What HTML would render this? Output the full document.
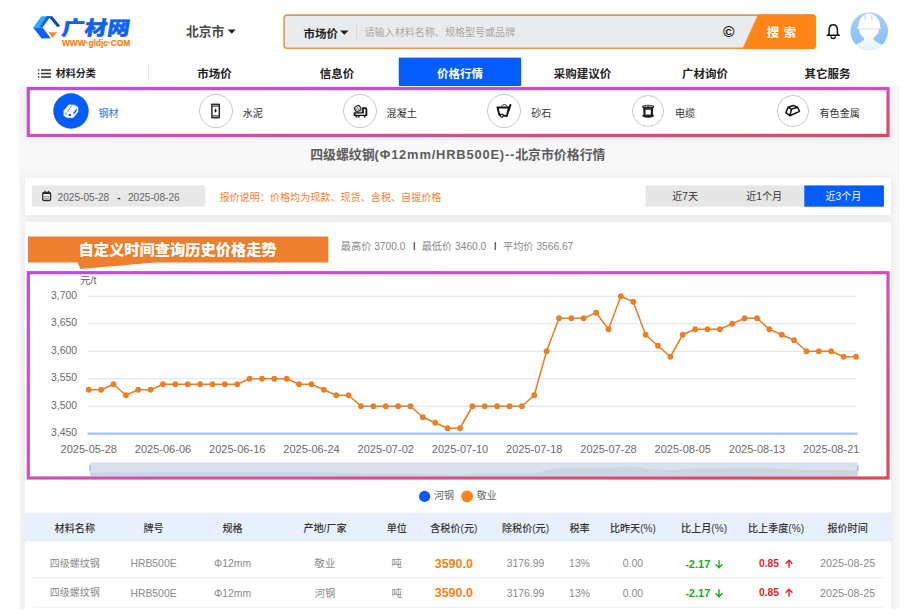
<!DOCTYPE html>
<html lang="zh-CN"><head><meta charset="utf-8"><title>广材网 - 四级螺纹钢价格行情</title>
<style>
html,body{margin:0;padding:0;background:#fff;}
body{width:916px;height:616px;position:relative;overflow:hidden;font-family:"Liberation Sans","Noto Sans CJK SC",sans-serif;}
.t{position:absolute;white-space:nowrap;}
.r,.abs{position:absolute;}
.sh{background:#fff;box-shadow:0 0 7px 1px rgba(0,0,0,0.075);}
.ar{font-family:"DejaVu Sans",sans-serif;font-weight:700;font-size:0.95em;}
</style></head><body>
<div class="abs" style="left:19px;top:86px;width:881px;height:523px;background:#f8f8f8;overflow:hidden">
<div class="abs sh" style="left:8px;top:1px;width:862px;height:50px"></div>
<div class="abs sh" style="left:6px;top:92px;width:866px;height:37px"></div>
<div class="abs sh" style="left:6px;top:136px;width:866px;height:420px"></div>
</div>
<svg class="abs" style="left:0;top:0" width="916" height="616" viewBox="0 0 916 616">
<defs>
<linearGradient id="pg" x1="0" y1="0" x2="1" y2="1"><stop offset="0" stop-color="#b553d8"/><stop offset="0.5" stop-color="#d24fbd"/><stop offset="1" stop-color="#e34658"/></linearGradient>
<linearGradient id="gl" x1="0" y1="0" x2="1" y2="0"><stop offset="0" stop-color="#f8f8f8"/><stop offset="1" stop-color="#ededed"/></linearGradient>
<linearGradient id="gr" x1="0" y1="0" x2="1" y2="0"><stop offset="0" stop-color="#f0f0f0"/><stop offset="1" stop-color="#f8f8f8"/></linearGradient>
</defs>
<!-- active tab -->
<rect x="398.8" y="57.6" width="122.3" height="28.4" fill="#035dfd"/>
<!-- category box -->
<rect x="29" y="89" width="858" height="46" fill="#fff"/>
<rect x="28.3" y="88.6" width="859.7" height="46.8" fill="none" stroke="url(#pg)" stroke-width="3.2"/>
<!-- card 1 -->
<rect x="25" y="177.5" width="866" height="37.5" fill="#fff"/>
<rect x="32" y="185.4" width="173.5" height="21.3" fill="#e8e8e8"/>
<rect x="645.5" y="185.4" width="159" height="21.3" fill="#e6e6e6"/>
<rect x="804.3" y="185.4" width="79.6" height="21.3" fill="#035dfd"/>
<!-- card 2 -->
<rect x="25" y="222" width="866" height="387" fill="#fff"/>
<!-- banner -->
<polygon points="28,236.5 328.3,236.5 328.3,262.4 155,262.4 80.3,269 77.6,262.4 28,262.4" fill="#ed7f2e"/>
<!-- table header -->
<rect x="25" y="512.6" width="866" height="28.8" fill="#e8f0fe"/>
<rect x="32.5" y="577.3" width="851.3" height="1" fill="#ececec"/>
<rect x="32.5" y="606.6" width="851.3" height="1" fill="#ececec"/>
</svg>
<svg class="abs" style="left:28px;top:10px" width="40" height="34" viewBox="28 10 40 34">
<polygon points="33.1,27.6 41.5,16.2 46.2,16.2 38.6,27.6" fill="#29b3f6"/>
<polygon points="38.6,27.6 46.2,16.2 50.4,16.8 42.6,27.6" fill="#0d6af5"/>
<polygon points="46,16.2 52.2,16.2 60.3,26 57.2,27 49.6,17.8" fill="#0a45b8"/>
<polygon points="33.1,27.6 42.6,27.6 50.8,38.2 41.6,38.4" fill="#0d5ff5"/>
<polygon points="48.2,32.3 56.9,32.3 52.6,37.9" fill="#f58a1f"/>
</svg>
<div class="t" style="left:62.3px;top:10.80px;line-height:36px;font-size:22.4px;color:#0f62f5;font-weight:900;-webkit-text-stroke:0.5px #0f62f5;transform:skewX(-9deg) scaleY(0.87);letter-spacing:0.3px;font-family:"Noto Sans CJK SC",sans-serif;">广材网</div>
<div class="t" style="left:62px;top:35.70px;line-height:15px;font-size:9.3px;color:#f58220;font-weight:700;-webkit-text-stroke:0.25px #f58220;transform-origin:0 50%;transform:scaleX(0.897);">WWW·gldjc·COM</div>
<div class="t" style="left:186px;top:21.90px;line-height:20px;font-size:12.8px;color:#484848;font-weight:700;">北京市</div>
<svg class="abs" style="left:228px;top:28px" width="10" height="8" viewBox="228 28 10 8"><polygon points="227.9,29.6 235.7,29.6 231.8,33.7" fill="#222"/></svg>
<svg class="abs" style="left:280px;top:12px" width="540" height="40" viewBox="280 12 540 40"><rect x="284.1" y="15.1" width="531" height="33.1" rx="3" fill="#eaebec" stroke="#e8954a" stroke-width="1.6"/></svg>
<div class="t" style="left:303.5px;top:25.00px;line-height:18px;font-size:11.5px;color:#222;font-weight:700;">市场价</div>
<svg class="abs" style="left:339px;top:29px" width="11" height="8" viewBox="339 29 11 8"><polygon points="340,30.6 348.6,30.6 344.3,34.8" fill="#222"/></svg>
<div class="r" style="left:356.2px;top:25px;width:1px;height:15px;background:#d8d8d8;"></div>
<div class="t" style="left:364.5px;top:25.00px;line-height:16px;font-size:10.05px;color:#a8a8a8;font-weight:400;">请输入材料名称、规格型号或品牌</div>
<div class="t" style="left:723px;top:19.00px;line-height:25px;font-size:15.5px;color:#111;font-weight:700;">©</div>
<svg class="abs" style="left:740px;top:14px" width="78" height="36" viewBox="740 14 78 36">
<path d="M758 14.5 H812.8 a3 3 0 0 1 3 3 V45.75 a3 3 0 0 1 -3 3 H742.5 Z" fill="#ff8517"/></svg>
<div class="t" style="left:781.7px;top:22.90px;line-height:20px;font-size:12.5px;color:#fff;font-weight:700;transform:translateX(-50%);letter-spacing:0.5px;">搜 索</div>
<svg class="abs" style="left:825px;top:22px" width="17" height="19" viewBox="825 22 17 19">
<path d="M827.2 35.200 H839.300 M828.500 35.200 C829.600 33.500 829 31.500 829.100 29.400 C829.300 26.500 831 24.700 833.250 24.700 C835.500 24.700 837.200 26.500 837.400 29.400 C837.500 31.500 836.900 33.500 838 35.200" fill="none" stroke="#111" stroke-width="1.500" stroke-linecap="round" stroke-linejoin="round"/>
<path d="M831 36.300 a2.200 2.200 0 0 0 4.400 0" fill="none" stroke="#111" stroke-width="1.300"/>
</svg>
<svg class="abs" style="left:849px;top:11px" width="41" height="41" viewBox="849 11 41 41">
<defs><clipPath id="ac"><circle cx="869.2" cy="31.2" r="18.8"/></clipPath>
<linearGradient id="ag" x1="0" y1="0" x2="0" y2="1"><stop offset="0" stop-color="#a8d0f8"/><stop offset="1" stop-color="#86bdf5"/></linearGradient>
<linearGradient id="ab" x1="0" y1="0" x2="0" y2="1"><stop offset="0" stop-color="#ffffff"/><stop offset="1" stop-color="#e3effc"/></linearGradient></defs>
<circle cx="869.2" cy="31.2" r="18.8" fill="url(#ag)"/>
<g clip-path="url(#ac)">
<path d="M858.3 27 a10.9 13.4 0 0 1 21.8 0 l0.9 0.9 v0.8 h-23.6 v-0.8 z" fill="#fff"/>
<path d="M859.5 29.2 h19.4 c0.3 4 -3.6 7 -5.6 9.3 c1 3.5 5.5 4.5 9.5 6.5 l-3 8 h-22 l-3 -8 c4 -2 8.5 -3 9.5 -6.5 c-2 -2.300 -5.900 -5.300 -4.800 -9.300 z" fill="url(#ab)"/>
<rect x="864.6" y="15" width="1.1" height="5.400" fill="#b9d8f8"/><rect x="871.4" y="15" width="1.1" height="5.400" fill="#b9d8f8"/>
</g></svg>
<svg class="abs" style="left:36px;top:67px" width="17" height="13" viewBox="36 67 17 13">
<g fill="#333"><rect x="37.9" y="69.3" width="1.4" height="1.5"/><rect x="41" y="69.3" width="10" height="1.5"/>
<rect x="37.9" y="72.8" width="1.4" height="1.5"/><rect x="41" y="72.8" width="10" height="1.5"/>
<rect x="37.9" y="76.3" width="1.4" height="1.5"/><rect x="41" y="76.3" width="10" height="1.5"/></g></svg>
<div class="t" style="left:55.8px;top:65.60px;line-height:16px;font-size:10px;color:#222;font-weight:700;">材料分类</div>
<div class="r" style="left:148px;top:64.5px;width:1px;height:14.5px;background:#e8e8e8;"></div>
<div class="t" style="left:214.6px;top:64.80px;line-height:18px;font-size:11.5px;color:#222;font-weight:700;transform:translateX(-50%);">市场价</div>
<div class="t" style="left:337px;top:64.80px;line-height:18px;font-size:11.5px;color:#222;font-weight:700;transform:translateX(-50%);">信息价</div>
<div class="t" style="left:460px;top:64.80px;line-height:18px;font-size:11.5px;color:#fff;font-weight:700;transform:translateX(-50%);">价格行情</div>
<div class="t" style="left:582.4px;top:64.80px;line-height:18px;font-size:11.5px;color:#222;font-weight:700;transform:translateX(-50%);">采购建议价</div>
<div class="t" style="left:705px;top:64.80px;line-height:18px;font-size:11.5px;color:#222;font-weight:700;transform:translateX(-50%);">广材询价</div>
<div class="t" style="left:827.6px;top:64.80px;line-height:18px;font-size:11.5px;color:#222;font-weight:700;transform:translateX(-50%);">其它服务</div>
<svg class="abs" style="left:52.2px;top:91.7px" width="38" height="38" viewBox="-19 -19 38 38"><circle r="17.7" fill="#035dfd"/><polygon points="-2.060,-6.230 3.390,-5.840 6.900,-3.900 6.900,0.780 2.220,6.620 -3.820,6.620 -7.130,4.670 -7.130,-0.390" fill="#fff" stroke="#fff" stroke-width="0.600" stroke-linejoin="round"/><path d="M0.700 -5.300 L-3.800 1.200" stroke="#035dfd" stroke-width="0.700"/><rect x="-2.260" y="2.920" width="2.140" height="2.140" fill="#035dfd"/><polygon points="2.420,1.560 5.530,-2.340 5.730,-0.390 2.800,3.900" fill="#035dfd"/><rect x="-5.400" y="1.560" width="0.800" height="2.340" fill="#035dfd"/></svg>
<div class="t" style="left:98.5px;top:106.00px;line-height:16px;font-size:10.1px;color:#2f74f5;font-weight:400;">钢材</div>
<svg class="abs" style="left:196.5px;top:91.7px" width="38" height="38" viewBox="-19 -19 38 38"><circle r="16.5" fill="#fff" stroke="#c9c9c9" stroke-width="1"/><g transform="translate(-0.400,0)"><rect x="-3.700" y="-6.500" width="7.400" height="13" rx="0.600" fill="#fff" stroke="#2e2e2e" stroke-width="1.500"/><path d="M-4.400 -6.500 H4.400 M-4.400 6.500 H4.400" stroke="#2e2e2e" stroke-width="1.700"/><path d="M-3.700 -4.600 H3.700 M-3.700 4.600 H3.700" stroke="#555" stroke-width="0.900"/><path d="M0 -2.500 C1.300 -1.200 1.300 0.800 0 1.600 C-1.300 0.800 -1.300 -1.200 0 -2.500 Z" fill="#111"/></g></svg>
<div class="t" style="left:242.7px;top:106.00px;line-height:16px;font-size:10.1px;color:#333;font-weight:400;">水泥</div>
<svg class="abs" style="left:340.7px;top:91.7px" width="38" height="38" viewBox="-19 -19 38 38"><circle r="16.5" fill="#fff" stroke="#c9c9c9" stroke-width="1"/><path d="M-6.300 1.200 H2.100 V-3.800 H5.300 Q7.300 -3.800 7.300 -1.800 V5.100 H-6.300 Z" fill="#151515"/><path d="M-4.500 2.500 H3.900 V-1.900 H5.450 V3.700 H-4.500 Z" fill="#fff"/><rect x="-4.500" y="5" width="1.800" height="1.500" fill="#151515"/><rect x="-1.900" y="5" width="1.500" height="1.500" fill="#151515"/><rect x="3.900" y="5" width="1.500" height="1.500" fill="#151515"/><g transform="translate(-2.300,-2.400) rotate(-35)"><rect x="-3" y="-2.700" width="6" height="5.400" rx="1.700" fill="#dcdcdc" stroke="#222" stroke-width="1.100"/><path d="M-1.500 -2.500 V2.500 M0.500 -2.500 V2.500" stroke="#666" stroke-width="0.600"/></g><circle cx="0.800" cy="0" r="0.800" fill="#555"/></svg>
<div class="t" style="left:386.5px;top:106.00px;line-height:16px;font-size:10.1px;color:#333;font-weight:400;">混凝土</div>
<svg class="abs" style="left:485.0px;top:91.7px" width="38" height="38" viewBox="-19 -19 38 38"><circle r="16.5" fill="#fff" stroke="#c9c9c9" stroke-width="1"/><path d="M-6.500 -3.500 H5.100 L2.800 5.100 L-4.600 3.900 Z" fill="#fff" stroke="#111" stroke-width="1.900" stroke-linejoin="round"/><path d="M4.300 0.200 L6.400 -6" stroke="#111" stroke-width="2" stroke-linecap="round"/><path d="M-3 -4.400 Q0.500 -8.400 3.600 -4.400" fill="none" stroke="#111" stroke-width="0.900"/><circle cx="-2.300" cy="4.700" r="1.500" fill="#fff" stroke="#111" stroke-width="1.200"/></svg>
<div class="t" style="left:531.2px;top:106.00px;line-height:16px;font-size:10.1px;color:#333;font-weight:400;">砂石</div>
<svg class="abs" style="left:629.3px;top:91.7px" width="38" height="38" viewBox="-19 -19 38 38"><circle r="15.5" fill="#fff" stroke="#c9c9c9" stroke-width="1"/><g transform="scale(1.080)"><path d="M-3.300 -2.800 V3.800 M3.600 -2.800 V3.800" stroke="#1a1a1a" stroke-width="2"/><ellipse cx="0.150" cy="-4" rx="5.700" ry="1.900" fill="#1a1a1a"/><path d="M-3.600 -4.300 Q0.150 -5 3.900 -4.300" stroke="#e8e8e8" stroke-width="0.800" fill="none" stroke-linecap="round"/><path d="M-4.600 -2.600 Q0.150 -1.300 4.900 -2.600 V-1.600 Q0.150 -0.500 -4.600 -1.600 Z" fill="#1a1a1a"/><path d="M-5.500 4 Q0.150 2.700 5.800 4 Q5.800 6 0.150 6.200 Q-5.500 6 -5.500 4 Z" fill="#1a1a1a"/></g></svg>
<div class="t" style="left:675.0px;top:106.00px;line-height:16px;font-size:10.1px;color:#333;font-weight:400;">电缆</div>
<svg class="abs" style="left:773.75px;top:91.7px" width="38" height="38" viewBox="-19 -19 38 38"><circle r="15.600000000000001" fill="#fff" stroke="#c9c9c9" stroke-width="1"/><path d="M-7.100 1.600 L-4.900 -3.700 L0.300 -5.500 L4.600 -3.700 L6.500 0.400 L-3.200 4.700 Z M-4.900 -3.700 L-1.400 -1.900 L-3.200 4.700 M-1.400 -1.900 L4.600 -3.700" fill="#fff" stroke="#111" stroke-width="1.500" stroke-linejoin="round"/><path d="M-1.200 -3.500 L1.300 -4.300" stroke="#999" stroke-width="0.600"/></svg>
<div class="t" style="left:819.5px;top:106.00px;line-height:16px;font-size:10.1px;color:#333;font-weight:400;">有色金属</div>
<div class="t" style="left:457.8px;top:144.20px;line-height:21px;font-size:12.9px;color:#5c5c5c;font-weight:700;transform:translateX(-50%);">四级螺纹钢<span style="letter-spacing:0.82px">(Φ12mm/HRB500E)--</span>北京市价格行情</div>
<svg class="abs" style="left:40px;top:189px" width="13" height="14" viewBox="40 189 13 14">
<rect x="42.700" y="192.300" width="7.900" height="8.200" rx="1.600" fill="none" stroke="#2b2b2b" stroke-width="1.300"/>
<rect x="42.700" y="192.300" width="7.900" height="1.600" rx="0.800" fill="#2b2b2b"/>
<rect x="44.300" y="190.800" width="1.200" height="2" fill="#2b2b2b"/><rect x="47.900" y="190.800" width="1.200" height="2" fill="#2b2b2b"/>
<rect x="44.700" y="196.300" width="3.900" height="2.300" fill="none" stroke="#7a7a7a" stroke-width="0.600"/></svg>
<div class="t" style="left:57.6px;top:189.50px;line-height:16px;font-size:10.1px;color:#666;font-weight:400;">2025-05-28</div>
<div class="t" style="left:117.3px;top:189.50px;line-height:16px;font-size:10.1px;color:#333;font-weight:700;">-</div>
<div class="t" style="left:128px;top:189.50px;line-height:16px;font-size:10.1px;color:#666;font-weight:400;">2025-08-26</div>
<div class="t" style="left:219.4px;top:189.60px;line-height:16px;font-size:10.1px;color:#f0822f;font-weight:400;">报价说明：价格均为现款、现货、含税、自提价格</div>
<div class="t" style="left:685.2px;top:188.90px;line-height:16px;font-size:10.1px;color:#333;font-weight:400;transform:translateX(-50%);">近7天</div>
<div class="t" style="left:764.2px;top:188.90px;line-height:16px;font-size:10.1px;color:#333;font-weight:400;transform:translateX(-50%);">近1个月</div>
<div class="t" style="left:843.4px;top:188.90px;line-height:16px;font-size:10.1px;color:#fff;font-weight:400;transform:translateX(-50%);">近3个月</div>
<div class="t" style="left:78.4px;top:238.10px;line-height:24px;font-size:15.25px;color:#fff;font-weight:900;font-family:"Noto Sans CJK SC",sans-serif;text-shadow:0 1px 1px rgba(160,70,0,.35);">自定义时间查询历史价格走势</div>
<div class="t" style="left:340.8px;top:239.40px;line-height:16px;font-size:10.2px;color:#888;font-weight:400;">最高价 3700.0</div>
<div class="t" style="left:412.8px;top:238.10px;line-height:17px;font-size:10.5px;color:#222;font-weight:400;">I</div>
<div class="t" style="left:421.7px;top:239.40px;line-height:16px;font-size:10.2px;color:#888;font-weight:400;">最低价 3460.0</div>
<div class="t" style="left:493.7px;top:238.10px;line-height:17px;font-size:10.5px;color:#222;font-weight:400;">I</div>
<div class="t" style="left:503px;top:239.40px;line-height:16px;font-size:10.2px;color:#888;font-weight:400;">平均价 3566.67</div>
<svg class="abs" style="left:0;top:0;font-family:'Liberation Sans','Noto Sans CJK SC',sans-serif" width="916" height="616" viewBox="0 0 916 616">
<rect x="29.5" y="274" width="857" height="202.500" fill="#fff"/>
<rect x="88.5" y="295.75" width="768" height="1" fill="#e0e0e0"/>
<rect x="88.5" y="323.25" width="768" height="1" fill="#e0e0e0"/>
<rect x="88.5" y="350.75" width="768" height="1" fill="#e0e0e0"/>
<rect x="88.5" y="378.25" width="768" height="1" fill="#e0e0e0"/>
<rect x="88.5" y="405.75" width="768" height="1" fill="#e0e0e0"/>
<text x="77" y="298.95" text-anchor="end" font-size="10.4" fill="#6b6b6b">3,700</text>
<text x="77" y="326.45" text-anchor="end" font-size="10.4" fill="#6b6b6b">3,650</text>
<text x="77" y="353.95" text-anchor="end" font-size="10.4" fill="#6b6b6b">3,600</text>
<text x="77" y="381.45" text-anchor="end" font-size="10.4" fill="#6b6b6b">3,550</text>
<text x="77" y="408.95" text-anchor="end" font-size="10.4" fill="#6b6b6b">3,500</text>
<text x="77" y="436.45" text-anchor="end" font-size="10.4" fill="#6b6b6b">3,450</text>
<text x="80" y="283.600" font-size="10.600" fill="#666">元/t</text>
<rect x="87.5" y="432.500" width="770" height="2.400" fill="#a9c4f6"/>
<text x="88.75" y="452.800" text-anchor="middle" font-size="11" fill="#6b6b6b">2025-05-28</text>
<text x="163.00" y="452.800" text-anchor="middle" font-size="11" fill="#6b6b6b">2025-06-06</text>
<text x="237.25" y="452.800" text-anchor="middle" font-size="11" fill="#6b6b6b">2025-06-16</text>
<text x="311.50" y="452.800" text-anchor="middle" font-size="11" fill="#6b6b6b">2025-06-24</text>
<text x="385.75" y="452.800" text-anchor="middle" font-size="11" fill="#6b6b6b">2025-07-02</text>
<text x="460.00" y="452.800" text-anchor="middle" font-size="11" fill="#6b6b6b">2025-07-10</text>
<text x="534.25" y="452.800" text-anchor="middle" font-size="11" fill="#6b6b6b">2025-07-18</text>
<text x="608.50" y="452.800" text-anchor="middle" font-size="11" fill="#6b6b6b">2025-07-28</text>
<text x="682.75" y="452.800" text-anchor="middle" font-size="11" fill="#6b6b6b">2025-08-05</text>
<text x="757.00" y="452.800" text-anchor="middle" font-size="11" fill="#6b6b6b">2025-08-13</text>
<text x="831.25" y="452.800" text-anchor="middle" font-size="11" fill="#6b6b6b">2025-08-21</text>
<rect x="90" y="462.300" width="767.700" height="13.900" fill="#dbe1ec"/>
<path d="M90 476.200 L90 470 L90.0 472.4 L102.4 472.4 L114.8 472.0 L127.1 472.7 L139.5 472.4 L151.9 472.4 L164.3 472.0 L176.7 472.0 L189.1 472.0 L201.4 472.0 L213.8 472.0 L226.2 472.0 L238.6 472.0 L251.0 471.7 L263.4 471.7 L275.7 471.7 L288.1 471.7 L300.5 472.0 L312.9 472.0 L325.3 472.4 L337.6 472.7 L350.0 472.7 L362.4 473.4 L374.8 473.4 L387.2 473.4 L399.6 473.4 L411.9 473.4 L424.3 474.1 L436.7 474.5 L449.1 474.8 L461.5 474.8 L473.9 473.4 L486.2 473.4 L498.6 473.4 L511.0 473.4 L523.4 473.4 L535.8 472.7 L548.1 470.0 L560.5 467.9 L572.9 467.9 L585.3 467.9 L597.7 467.5 L610.1 468.6 L622.4 466.5 L634.8 466.8 L647.2 468.9 L659.6 469.6 L672.0 470.3 L684.3 468.9 L696.7 468.6 L709.1 468.6 L721.5 468.6 L733.9 468.2 L746.3 467.9 L758.6 467.9 L771.0 468.6 L783.4 468.9 L795.8 469.3 L808.2 470.0 L820.6 470.0 L832.9 470.0 L845.3 470.3 L857.7 470.3 L857.700 476.200 Z" fill="#ccd5e3"/>
<rect x="89.300" y="465" width="1.600" height="6" rx="0.500" fill="#a9bbe0"/><rect x="857" y="465" width="1.600" height="6" rx="0.500" fill="#a9bbe0"/>
<polyline fill="none" stroke="#ec8026" stroke-width="1.600" stroke-linejoin="round" points="88.75,389.75 101.12,389.75 113.50,384.25 125.88,395.25 138.25,389.75 150.62,389.75 163.00,384.25 175.38,384.25 187.75,384.25 200.12,384.25 212.50,384.25 224.88,384.25 237.25,384.25 249.62,378.75 262.00,378.75 274.38,378.75 286.75,378.75 299.12,384.25 311.50,384.25 323.88,389.75 336.25,395.25 348.62,395.25 361.00,406.25 373.38,406.25 385.75,406.25 398.12,406.25 410.50,406.25 422.88,417.25 435.25,422.75 447.62,428.25 460.00,428.25 472.38,406.25 484.75,406.25 497.12,406.25 509.50,406.25 521.88,406.25 534.25,395.25 546.62,351.25 559.00,318.25 571.38,318.25 583.75,318.25 596.12,312.75 608.50,329.25 620.88,296.25 633.25,301.75 645.62,334.75 658.00,345.75 670.38,356.75 682.75,334.75 695.12,329.25 707.50,329.25 719.88,329.25 732.25,323.75 744.62,318.25 757.00,318.25 769.38,329.25 781.75,334.75 794.12,340.25 806.50,351.25 818.88,351.25 831.25,351.25 843.62,356.75 856.00,356.75"/>
<circle cx="88.75" cy="389.75" r="2.900" fill="#ec8026"/>
<circle cx="101.12" cy="389.75" r="2.900" fill="#ec8026"/>
<circle cx="113.50" cy="384.25" r="2.900" fill="#ec8026"/>
<circle cx="125.88" cy="395.25" r="2.900" fill="#ec8026"/>
<circle cx="138.25" cy="389.75" r="2.900" fill="#ec8026"/>
<circle cx="150.62" cy="389.75" r="2.900" fill="#ec8026"/>
<circle cx="163.00" cy="384.25" r="2.900" fill="#ec8026"/>
<circle cx="175.38" cy="384.25" r="2.900" fill="#ec8026"/>
<circle cx="187.75" cy="384.25" r="2.900" fill="#ec8026"/>
<circle cx="200.12" cy="384.25" r="2.900" fill="#ec8026"/>
<circle cx="212.50" cy="384.25" r="2.900" fill="#ec8026"/>
<circle cx="224.88" cy="384.25" r="2.900" fill="#ec8026"/>
<circle cx="237.25" cy="384.25" r="2.900" fill="#ec8026"/>
<circle cx="249.62" cy="378.75" r="2.900" fill="#ec8026"/>
<circle cx="262.00" cy="378.75" r="2.900" fill="#ec8026"/>
<circle cx="274.38" cy="378.75" r="2.900" fill="#ec8026"/>
<circle cx="286.75" cy="378.75" r="2.900" fill="#ec8026"/>
<circle cx="299.12" cy="384.25" r="2.900" fill="#ec8026"/>
<circle cx="311.50" cy="384.25" r="2.900" fill="#ec8026"/>
<circle cx="323.88" cy="389.75" r="2.900" fill="#ec8026"/>
<circle cx="336.25" cy="395.25" r="2.900" fill="#ec8026"/>
<circle cx="348.62" cy="395.25" r="2.900" fill="#ec8026"/>
<circle cx="361.00" cy="406.25" r="2.900" fill="#ec8026"/>
<circle cx="373.38" cy="406.25" r="2.900" fill="#ec8026"/>
<circle cx="385.75" cy="406.25" r="2.900" fill="#ec8026"/>
<circle cx="398.12" cy="406.25" r="2.900" fill="#ec8026"/>
<circle cx="410.50" cy="406.25" r="2.900" fill="#ec8026"/>
<circle cx="422.88" cy="417.25" r="2.900" fill="#ec8026"/>
<circle cx="435.25" cy="422.75" r="2.900" fill="#ec8026"/>
<circle cx="447.62" cy="428.25" r="2.900" fill="#ec8026"/>
<circle cx="460.00" cy="428.25" r="2.900" fill="#ec8026"/>
<circle cx="472.38" cy="406.25" r="2.900" fill="#ec8026"/>
<circle cx="484.75" cy="406.25" r="2.900" fill="#ec8026"/>
<circle cx="497.12" cy="406.25" r="2.900" fill="#ec8026"/>
<circle cx="509.50" cy="406.25" r="2.900" fill="#ec8026"/>
<circle cx="521.88" cy="406.25" r="2.900" fill="#ec8026"/>
<circle cx="534.25" cy="395.25" r="2.900" fill="#ec8026"/>
<circle cx="546.62" cy="351.25" r="2.900" fill="#ec8026"/>
<circle cx="559.00" cy="318.25" r="2.900" fill="#ec8026"/>
<circle cx="571.38" cy="318.25" r="2.900" fill="#ec8026"/>
<circle cx="583.75" cy="318.25" r="2.900" fill="#ec8026"/>
<circle cx="596.12" cy="312.75" r="2.900" fill="#ec8026"/>
<circle cx="608.50" cy="329.25" r="2.900" fill="#ec8026"/>
<circle cx="620.88" cy="296.25" r="2.900" fill="#ec8026"/>
<circle cx="633.25" cy="301.75" r="2.900" fill="#ec8026"/>
<circle cx="645.62" cy="334.75" r="2.900" fill="#ec8026"/>
<circle cx="658.00" cy="345.75" r="2.900" fill="#ec8026"/>
<circle cx="670.38" cy="356.75" r="2.900" fill="#ec8026"/>
<circle cx="682.75" cy="334.75" r="2.900" fill="#ec8026"/>
<circle cx="695.12" cy="329.25" r="2.900" fill="#ec8026"/>
<circle cx="707.50" cy="329.25" r="2.900" fill="#ec8026"/>
<circle cx="719.88" cy="329.25" r="2.900" fill="#ec8026"/>
<circle cx="732.25" cy="323.75" r="2.900" fill="#ec8026"/>
<circle cx="744.62" cy="318.25" r="2.900" fill="#ec8026"/>
<circle cx="757.00" cy="318.25" r="2.900" fill="#ec8026"/>
<circle cx="769.38" cy="329.25" r="2.900" fill="#ec8026"/>
<circle cx="781.75" cy="334.75" r="2.900" fill="#ec8026"/>
<circle cx="794.12" cy="340.25" r="2.900" fill="#ec8026"/>
<circle cx="806.50" cy="351.25" r="2.900" fill="#ec8026"/>
<circle cx="818.88" cy="351.25" r="2.900" fill="#ec8026"/>
<circle cx="831.25" cy="351.25" r="2.900" fill="#ec8026"/>
<circle cx="843.62" cy="356.75" r="2.900" fill="#ec8026"/>
<circle cx="856.00" cy="356.75" r="2.900" fill="#ec8026"/>
<rect x="28.300" y="272.700" width="859.700" height="205.300" fill="none" stroke="url(#pg)" stroke-width="3.200"/>
<circle cx="424.600" cy="496.400" r="5.600" fill="#035dfd"/><circle cx="467.100" cy="496.400" r="5.900" fill="#ff8517"/>
</svg>
<div class="t" style="left:434px;top:488.30px;line-height:16px;font-size:10px;color:#666;font-weight:400;">河钢</div>
<div class="t" style="left:476.7px;top:488.30px;line-height:16px;font-size:10px;color:#666;font-weight:400;">敬业</div>
<div class="t" style="left:74.8px;top:520.70px;line-height:16px;font-size:10.1px;color:#333;font-weight:500;transform:translateX(-50%);">材料名称</div>
<div class="t" style="left:153.5px;top:520.70px;line-height:16px;font-size:10.1px;color:#333;font-weight:500;transform:translateX(-50%);">牌号</div>
<div class="t" style="left:232.5px;top:520.70px;line-height:16px;font-size:10.1px;color:#333;font-weight:500;transform:translateX(-50%);">规格</div>
<div class="t" style="left:325px;top:520.70px;line-height:16px;font-size:10.1px;color:#333;font-weight:500;transform:translateX(-50%);">产地/厂家</div>
<div class="t" style="left:396.8px;top:520.70px;line-height:16px;font-size:10.1px;color:#333;font-weight:500;transform:translateX(-50%);">单位</div>
<div class="t" style="left:453.8px;top:520.70px;line-height:16px;font-size:10.1px;color:#333;font-weight:500;transform:translateX(-50%);">含税价(元)</div>
<div class="t" style="left:525.5px;top:520.70px;line-height:16px;font-size:10.1px;color:#333;font-weight:500;transform:translateX(-50%);">除税价(元)</div>
<div class="t" style="left:579.5px;top:520.70px;line-height:16px;font-size:10.1px;color:#333;font-weight:500;transform:translateX(-50%);">税率</div>
<div class="t" style="left:632.9px;top:520.70px;line-height:16px;font-size:10.1px;color:#333;font-weight:500;transform:translateX(-50%);">比昨天(%)</div>
<div class="t" style="left:704px;top:520.70px;line-height:16px;font-size:10.1px;color:#333;font-weight:500;transform:translateX(-50%);">比上月(%)</div>
<div class="t" style="left:776px;top:520.70px;line-height:16px;font-size:10.1px;color:#333;font-weight:500;transform:translateX(-50%);">比上季度(%)</div>
<div class="t" style="left:847.6px;top:520.70px;line-height:16px;font-size:10.1px;color:#333;font-weight:500;transform:translateX(-50%);">报价时间</div>
<div class="t" style="left:74.8px;top:555.90px;line-height:16px;font-size:10px;color:#8a8a8a;font-weight:400;transform:translateX(-50%);">四级螺纹钢</div>
<div class="t" style="left:153.5px;top:555.40px;line-height:17px;font-size:10.4px;color:#8a8a8a;font-weight:400;transform:translateX(-50%);">HRB500E</div>
<div class="t" style="left:232.5px;top:555.40px;line-height:17px;font-size:10.4px;color:#8a8a8a;font-weight:400;transform:translateX(-50%);">Φ12mm</div>
<div class="t" style="left:325px;top:555.40px;line-height:17px;font-size:10.4px;color:#8a8a8a;font-weight:400;transform:translateX(-50%);">敬业</div>
<div class="t" style="left:396.8px;top:555.40px;line-height:17px;font-size:10.4px;color:#8a8a8a;font-weight:400;transform:translateX(-50%);">吨</div>
<div class="t" style="left:453.8px;top:553.90px;line-height:20px;font-size:12.5px;color:#f08519;font-weight:700;transform:translateX(-50%);">3590.0</div>
<div class="t" style="left:525.5px;top:555.40px;line-height:17px;font-size:10.4px;color:#8a8a8a;font-weight:400;transform:translateX(-50%);">3176.99</div>
<div class="t" style="left:579.5px;top:555.40px;line-height:17px;font-size:10.4px;color:#8a8a8a;font-weight:400;transform:translateX(-50%);">13%</div>
<div class="t" style="left:632.9px;top:555.40px;line-height:17px;font-size:10.4px;color:#8a8a8a;font-weight:400;transform:translateX(-50%);">0.00</div>
<div class="t" style="left:685.2px;top:554.90px;line-height:18px;font-size:11px;color:#19ad19;font-weight:700;">-2.17</div>
<svg class="abs" style="left:713px;top:557.9px" width="12" height="12" viewBox="-6 -6 12 12"><path d="M0 -3.700 V3.400 M-3.400 0.300 L0 3.700 L3.400 0.300" fill="none" stroke="#19ad19" stroke-width="1.400"/><title>↓</title></svg>
<div class="t" style="left:759px;top:555.90px;line-height:16px;font-size:10.3px;color:#e5222a;font-weight:700;">0.85</div>
<svg class="abs" style="left:783px;top:557.9px" width="12" height="12" viewBox="-6 -6 12 12"><path d="M0 3.700 V-3.400 M-3.400 -0.300 L0 -3.700 L3.400 -0.300" fill="none" stroke="#e5222a" stroke-width="1.400"/><title>↑</title></svg>
<div class="t" style="left:847.6px;top:555.40px;line-height:17px;font-size:10.8px;color:#8a8a8a;font-weight:400;transform:translateX(-50%);">2025-08-25</div>
<div class="t" style="left:74.8px;top:585.20px;line-height:16px;font-size:10px;color:#8a8a8a;font-weight:400;transform:translateX(-50%);">四级螺纹钢</div>
<div class="t" style="left:153.5px;top:584.70px;line-height:17px;font-size:10.4px;color:#8a8a8a;font-weight:400;transform:translateX(-50%);">HRB500E</div>
<div class="t" style="left:232.5px;top:584.70px;line-height:17px;font-size:10.4px;color:#8a8a8a;font-weight:400;transform:translateX(-50%);">Φ12mm</div>
<div class="t" style="left:325px;top:584.70px;line-height:17px;font-size:10.4px;color:#8a8a8a;font-weight:400;transform:translateX(-50%);">河钢</div>
<div class="t" style="left:396.8px;top:584.70px;line-height:17px;font-size:10.4px;color:#8a8a8a;font-weight:400;transform:translateX(-50%);">吨</div>
<div class="t" style="left:453.8px;top:583.20px;line-height:20px;font-size:12.5px;color:#f08519;font-weight:700;transform:translateX(-50%);">3590.0</div>
<div class="t" style="left:525.5px;top:584.70px;line-height:17px;font-size:10.4px;color:#8a8a8a;font-weight:400;transform:translateX(-50%);">3176.99</div>
<div class="t" style="left:579.5px;top:584.70px;line-height:17px;font-size:10.4px;color:#8a8a8a;font-weight:400;transform:translateX(-50%);">13%</div>
<div class="t" style="left:632.9px;top:584.70px;line-height:17px;font-size:10.4px;color:#8a8a8a;font-weight:400;transform:translateX(-50%);">0.00</div>
<div class="t" style="left:685.2px;top:584.20px;line-height:18px;font-size:11px;color:#19ad19;font-weight:700;">-2.17</div>
<svg class="abs" style="left:713px;top:587.2px" width="12" height="12" viewBox="-6 -6 12 12"><path d="M0 -3.700 V3.400 M-3.400 0.300 L0 3.700 L3.400 0.300" fill="none" stroke="#19ad19" stroke-width="1.400"/><title>↓</title></svg>
<div class="t" style="left:759px;top:585.20px;line-height:16px;font-size:10.3px;color:#e5222a;font-weight:700;">0.85</div>
<svg class="abs" style="left:783px;top:587.2px" width="12" height="12" viewBox="-6 -6 12 12"><path d="M0 3.700 V-3.400 M-3.400 -0.300 L0 -3.700 L3.400 -0.300" fill="none" stroke="#e5222a" stroke-width="1.400"/><title>↑</title></svg>
<div class="t" style="left:847.6px;top:584.70px;line-height:17px;font-size:10.8px;color:#8a8a8a;font-weight:400;transform:translateX(-50%);">2025-08-25</div>
</body></html>
